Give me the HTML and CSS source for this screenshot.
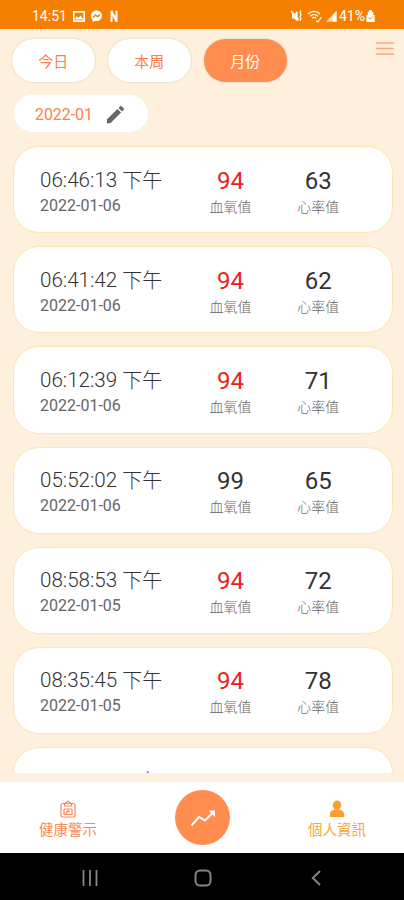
FILE: index.html
```html
<!DOCTYPE html>
<html lang="zh-Hant">
<head>
  <meta charset="UTF-8">
  <meta name="viewport" content="width=device-width, initial-scale=1">
  <title>健康紀錄</title>
  <link rel="stylesheet" href="styles.css">
</head>
<body>
<div class="phone">

  <!-- Status bar -->
  <div class="status-bar">
    <span class="clock">14:51</span>
    <svg class="status-left" width="50" height="14" viewBox="0 0 50 14">
      <path fill="#fff" fill-rule="evenodd" d="M1 2h12v11H1zM2.600 3.800v7.500h8.800V3.800z"/>
      <path fill="#fff" d="M2.500 10.500l2.300-3.300 1.700 1.800 2-2.600 2.800 4.100z"/>
      <path fill="#fff" d="M24.500 1.500c-3.200 0-5.600 2.300-5.600 5.300 0 1.600.700 3 1.800 4v2.200l2-1.100c3.900.900 7.400-1.600 7.400-5.100 0-3-2.400-5.300-5.600-5.300z"/>
      <path fill="none" stroke="#f77f00" stroke-width="1.400" d="M21.200 8.600l2.500-2.600 1.800 1.700 2.500-2.400"/>
      <path fill="none" stroke="#fff" stroke-width="2" d="M39.500 13V1.800M44.500 13V1.800M39.500 2l5 10.700"/>
    </svg>
    <svg class="status-right" width="48" height="14" viewBox="0 0 48 14">
      <path fill="#fff" d="M2 5h2.200l3.300-3v10.500L4.200 9.500H2z"/>
      <path fill="none" stroke="#fff" stroke-width="1.300" d="M1 2l8 9M11 1.500l-1 2 1 2-1 2 1 2-1 2.500"/>
      <g fill="none" stroke="#fff" stroke-width="1.200">
        <path d="M18 5c3.500-3.500 9-3.500 12 0M20 7.300c2.200-2.400 6-2.400 8 0M22.200 9.300c1-1.200 2.800-1.200 4 0"/>
        <path d="M26 11.500l2 1.500 3.500-5"/>
      </g>
      <path fill="#ffd9b3" d="M36 12.800L46.500 2v10.800z"/>
      <path fill="#fff" d="M43 5.600L46.500 2v10.800H43z"/>
    </svg>
    <span class="battery-text">41%</span>
    <svg width="9" height="12" viewBox="0 0 9 13">
      <path fill="#fff" d="M3 0h3v1.800h1.500v3.700H9V13H0V5.500h1.500V1.800H3z"/>
      <path fill="none" stroke="#f77f00" stroke-width="1" d="M2.500 8l1.600 2L7 7"/>
    </svg>
  </div>

  <!-- Range tabs -->
  <div class="tabs">
    <button class="tab">今日</button>
    <button class="tab">本周</button>
    <button class="tab active">月份</button>
    <svg class="menu-icon" width="18" height="13" viewBox="0 0 18 13">
      <path fill="none" stroke="#ffa578" stroke-width="1.300" d="M0 1h18M0 6.500h18M0 12h18"/>
    </svg>
  </div>

  <!-- Month picker -->
  <div class="month">
    <span>2022-01</span>
    <svg width="23" height="23" viewBox="0 0 24 24">
      <path fill="#666" d="M3 17.250V21h3.750L17.810 9.940l-3.750-3.750zM20.710 7.040a1 1 0 0 0 0-1.410l-2.340-2.340a1 1 0 0 0-1.410 0l-1.830 1.830 3.750 3.750z"/>
    </svg>
  </div>

  <!-- Records -->
  <div class="records">
    <div class="card">
      <div class="when"><div class="time">06:46:13 <span>下午</span></div><div class="date">2022-01-06</div></div>
      <div class="value low"><b>94</b><span>血氧值</span></div>
      <div class="value"><b>63</b><span>心率值</span></div>
    </div>
    <div class="card">
      <div class="when"><div class="time">06:41:42 <span>下午</span></div><div class="date">2022-01-06</div></div>
      <div class="value low"><b>94</b><span>血氧值</span></div>
      <div class="value"><b>62</b><span>心率值</span></div>
    </div>
    <div class="card">
      <div class="when"><div class="time">06:12:39 <span>下午</span></div><div class="date">2022-01-06</div></div>
      <div class="value low"><b>94</b><span>血氧值</span></div>
      <div class="value"><b>71</b><span>心率值</span></div>
    </div>
    <div class="card">
      <div class="when"><div class="time">05:52:02 <span>下午</span></div><div class="date">2022-01-06</div></div>
      <div class="value"><b>99</b><span>血氧值</span></div>
      <div class="value"><b>65</b><span>心率值</span></div>
    </div>
    <div class="card">
      <div class="when"><div class="time">08:58:53 <span>下午</span></div><div class="date">2022-01-05</div></div>
      <div class="value low"><b>94</b><span>血氧值</span></div>
      <div class="value"><b>72</b><span>心率值</span></div>
    </div>
    <div class="card">
      <div class="when"><div class="time">08:35:45 <span>下午</span></div><div class="date">2022-01-05</div></div>
      <div class="value low"><b>94</b><span>血氧值</span></div>
      <div class="value"><b>78</b><span>心率值</span></div>
    </div>
    <div class="card">
      <div class="when"><div class="time">08:32:10 <span>下午</span></div></div>
      <div class="value low"><b>94</b></div>
      <div class="value"><b>76</b></div>
    </div>
  </div>

  <!-- Bottom navigation -->
  <div class="bottom-nav">
    <div class="nav-item alert">
      <svg width="16" height="18" viewBox="0 0 16 18">
        <g fill="none" stroke="#f58a5c" stroke-width="1.200">
          <rect x="1" y="3.500" width="14" height="13.500" rx="1.500"/>
          <path d="M4.500 6V4L8 1l3.500 3v2zM4 9h8M4 9v5.500h8V9M6 11.800h4M8 9v3M6 14v-2"/>
        </g>
      </svg>
      <span>健康警示</span>
    </div>
    <div class="chart-button">
      <svg width="26" height="18" viewBox="0 0 26 18">
        <path fill="none" stroke="#fff" stroke-width="2" d="M1.500 16.500l7.500-8.500 6 3.500L23 3.500"/>
        <path fill="#fff" d="M18.500 1.500H25v6.500z"/>
      </svg>
    </div>
    <div class="nav-item profile">
      <svg width="16" height="18" viewBox="0 0 16 18">
        <ellipse cx="8" cy="5.200" rx="4.200" ry="4.600" fill="#f5a02c"/>
        <path fill="#f5a02c" d="M.800 17v-2.500c0-2.500 2-4.200 4.700-5h5c2.700.800 4.700 2.500 4.700 5V17z"/>
      </svg>
      <span>個人資訊</span>
    </div>
  </div>

  <!-- System buttons -->
  <div class="system-bar">
    <svg width="16" height="16" viewBox="0 0 16 16"><path fill="none" stroke="#858585" stroke-width="1.800" d="M1.500 0v16M8 0v16M14.500 0v16"/></svg>
    <svg class="home-button" width="18" height="18" viewBox="0 0 18 18"><rect x="1.500" y="1.500" width="15" height="15" rx="4.500" fill="none" stroke="#858585" stroke-width="2"/></svg>
    <svg width="10" height="16" viewBox="0 0 10 16"><path fill="none" stroke="#858585" stroke-width="2" d="M9 1L1.800 8 9 15"/></svg>
  </div>

</div>
</body>
</html>
```
FILE: styles.css
```css
* {
  box-sizing: border-box;
}

body {
  margin: 0;
  font-family: Roboto, "Noto Sans CJK TC", sans-serif;
}

.phone {
  display: flex;
  flex-direction: column;
  width: 404px;
  height: 900px;
  overflow: hidden;
  background: #fef0dd;
}

/* Status bar */
.status-bar {
  display: flex;
  align-items: center;
  height: 29px;
  padding: 3px 29px 0 32px;
  background: #f77f00;
  color: #fff;
  font-size: 14px;
}

.status-left {
  margin-left: 5px;
}

.status-right {
  margin-left: auto;
}

.battery-text {
  margin: 0 1px 0 1px;
}

/* Tabs */
.tabs {
  display: flex;
  gap: 13.500px;
  height: 66px;
  padding: 10px 10px 0 12px;
}

.tab {
  width: 82.500px;
  height: 43px;
  padding: 0 0 1px;
  border: none;
  border-radius: 22px;
  background: #fff;
  box-shadow: 0 0 2px rgba(120, 90, 50, 0.3);
  color: #ff8047;
  font-family: inherit;
  font-size: 15px;
}

.tab.active {
  background: #ff8d50;
  color: #fff;
}

.menu-icon {
  margin: 3px 0 0 auto;
}

/* Month picker */
.month {
  display: flex;
  align-items: center;
  gap: 11px;
  width: 134px;
  height: 37px;
  margin-left: 14px;
  padding: 1px 0 0 21px;
  border-radius: 19px;
  background: #fff;
  color: #ff8047;
  font-size: 15.900px;
}

/* Records */
.records {
  display: flex;
  flex-direction: column;
  gap: 13px;
  height: 627px;
  margin-top: 14px;
  margin-bottom: 9px;
  padding: 0 11px 0 13px;
  overflow: hidden;
}

.card {
  display: flex;
  flex-shrink: 0;
  height: 87.200px;
  padding: 20.500px 30px 0 26px;
  border: 1px solid #ffe4b5;
  border-radius: 26px;
  background: #fff;
  color: #333;
}

.when {
  width: 147px;
}

.time {
  height: 27px;
  font-size: 20.600px;
  font-weight: 300;
  line-height: 25px;
  white-space: nowrap;
}

.time span {
  font-size: 20px;
  line-height: 1;
  vertical-align: -1px;
}

.date {
  color: #666;
  font-size: 16px;
  line-height: 22px;
}

.value {
  width: 88px;
  text-align: center;
}

.value b {
  display: block;
  height: 27px;
  font-size: 24px;
  font-weight: 400;
  line-height: 26px;
}

.value span {
  display: block;
  color: #666;
  font-size: 14px;
  font-weight: 300;
  line-height: 24px;
}

.value.low b {
  color: #e82222;
}

/* Bottom navigation */
.bottom-nav {
  display: flex;
  align-items: center;
  justify-content: space-between;
  height: 71px;
  padding: 0 37px 0 38px;
  background: #fff;
}

.nav-item {
  display: flex;
  flex-direction: column;
  align-items: center;
  gap: 1px;
  width: 60px;
  padding-top: 7px;
  font-size: 14.500px;
  line-height: 24px;
}

.alert {
  color: #f58a5c;
}

.profile {
  color: #f5a63d;
}

.chart-button {
  display: flex;
  align-items: center;
  justify-content: center;
  width: 55px;
  height: 55px;
  border-radius: 50%;
  background: #ff8d50;
}

/* System buttons */
.system-bar {
  display: flex;
  align-items: center;
  justify-content: space-between;
  height: 47px;
  padding: 2px 83px 0 82px;
  background: #000;
}

.home-button {
  margin-right: 4px;
}
```
